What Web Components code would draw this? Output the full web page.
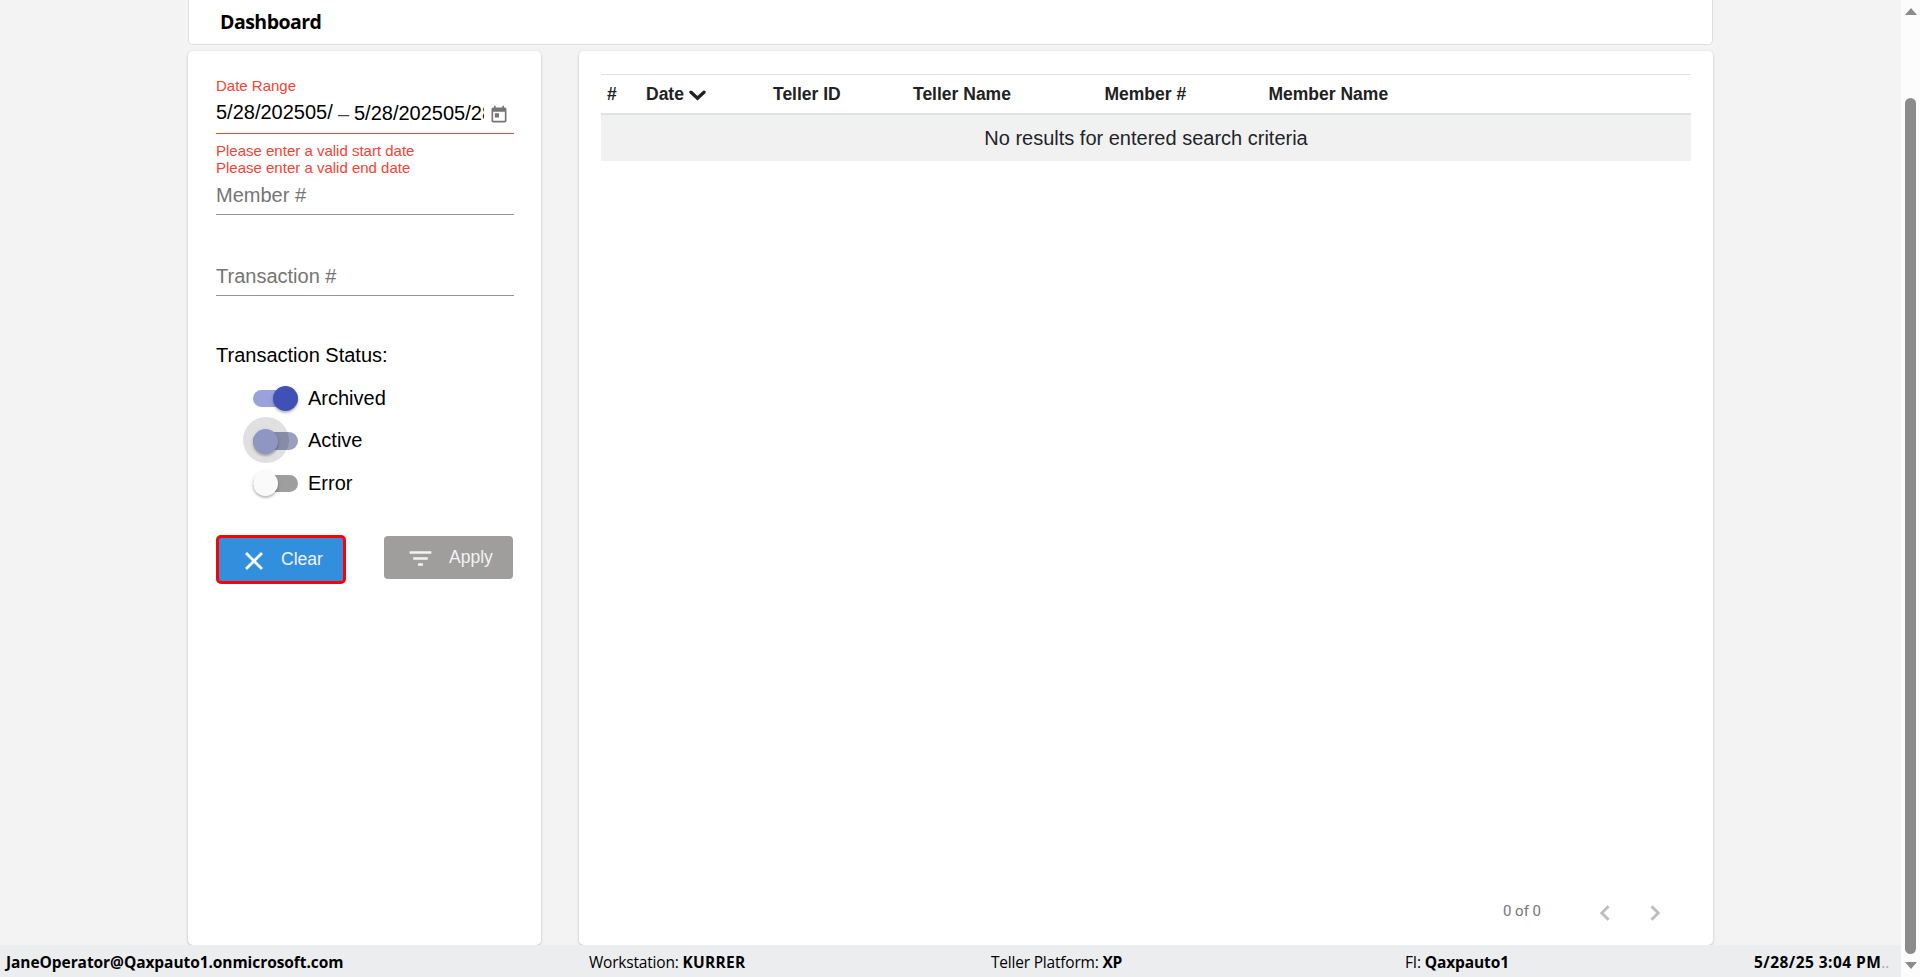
<!DOCTYPE html>
<html lang="en">
<head>
<meta charset="utf-8">
<title>Dashboard</title>
<style>
html,body{margin:0;height:100%;overflow:hidden;background:#f3f3f3;color:#000;font-family:"Liberation Sans",Arial,sans-serif}
</style>
</head>
<body>
<teller-app></teller-app>
<script>
const define = (name, html) => customElements.define(name, class extends HTMLElement {
  constructor() {
    super();
    const t = document.createElement('template');
    t.innerHTML = html;
    this.attachShadow({ mode: 'open' }).appendChild(t.content.cloneNode(true));
  }
});

define('page-title', `<style>
:host{display:flex;box-sizing:border-box;height:45px;padding:0 31px;border:1px solid #dedede;border-top:0;border-radius:0 0 5px 5px;background:#fff;font:700 19.5px/44px "Open Sans","Noto Sans",sans-serif;letter-spacing:-.52px}
</style><slot></slot>`);

define('ui-card', `<style>
:host{display:flex;flex-direction:column;box-sizing:border-box;background:#fff;border-radius:5px;box-shadow:0 1px 3px rgba(0,0,0,.22)}
</style><slot></slot>`);

define('date-range', `<style>
:host{display:block;height:101px;box-sizing:border-box}
.label{height:17px;font-size:15px;line-height:17px;color:#f44336}
.row{display:flex;align-items:center;height:39px;border-bottom:1px solid #f44336;font-size:20px;line-height:24px}
.v{overflow:hidden;white-space:nowrap}
.s{width:117px;padding-bottom:3px}.dash{width:21px;text-align:center;color:#444;padding-top:0}.e{width:130px;padding-bottom:1px}
svg{margin-left:5px;margin-top:2px;flex:none}
.err{margin-top:8px;font-size:15px;line-height:17px;color:#f44336}
</style>
<div class="label">Date Range</div>
<div class="row"><span class="v s">5/28/202505/</span><span class="dash">–</span><span class="v e">5/28/202505/28</span>
<svg width="20" height="20" viewBox="0 0 24 24" fill="#757575"><path d="M19 3h-1V1h-2v2H8V1H6v2H5c-1.100 0-2 .9-2 2v14c0 1.100.9 2 2 2h14c1.100 0 2-.9 2-2V5c0-1.100-.9-2-2-2zm0 16H5V8h14v11zM7 10h5v5H7z"/></svg></div>
<div class="err">Please enter a valid start date<br>Please enter a valid end date</div>`);

define('text-field', `<style>
:host{display:block;box-sizing:border-box;height:33px;border-bottom:1px solid #949494;font-size:20px;line-height:24px;color:#757575;padding-top:1px}
</style><slot></slot>`);

define('slide-toggle', `<style>
:host{display:flex;align-items:center;height:42.5px;margin-left:37px;font-size:20px;gap:10px}
.t{position:relative;width:45px;height:17.5px;border-radius:9px;background:#9e9e9e}
.k{position:absolute;left:0;top:-3.500px;width:25px;height:25px;border-radius:50%;background:#fafafa;box-shadow:0 2px 2px rgba(0,0,0,.2),0 1px 4px rgba(0,0,0,.12)}
:host([state=on]) .t{background:#9aa2dc}
:host([state=on]) .k{left:20px;background:#3f51b5}
:host([state=mid]) .t{background:#9a9fbd}
:host([state=mid]) .k{background:#8f96c1}
.r{display:none;position:absolute;left:-10px;top:-15px;width:46px;height:46px;border-radius:50%;background:rgba(0,0,0,.12)}
:host([state=mid]) .r{display:block}
</style><div class="t"><span class="r"></span><span class="k"></span></div><slot></slot>`);

define('action-button', `<style>
:host{display:flex;box-sizing:border-box;align-items:center;width:129px;height:43px;margin-top:1px;padding-left:22px;border-radius:4px;background:#9f9e9c;color:#f3f3f3;font-size:17.5px}
:host([primary]){width:130px;height:49px;margin-top:0;border:3px solid #f00;border-radius:5px;background:#318fdd;padding-left:20px}
svg{flex:none;margin-top:3px}
slot{display:block;margin-left:14px}
:host([primary]) svg{margin-top:4px}
:host([primary]) slot{margin-left:12px}
.f{display:block}.x{display:none}
:host([primary]) .f{display:none}:host([primary]) .x{display:block}
</style>
<svg class="f" width="29" height="29" viewBox="0 0 24 24" fill="#f3f3f3"><path d="M10 18h4v-2h-4v2zM3 6v2h18V6H3zm3 7h12v-2H6v2z"/></svg>
<svg class="x" width="30" height="30" viewBox="0 0 24 24" fill="#fff" stroke="#fff" stroke-width=".3"><path d="M19 6.410 17.590 5 12 10.590 6.410 5 5 6.410 10.590 12 5 17.590 6.410 19 12 13.410 17.590 19 19 17.590 13.410 12z"/></svg>
<slot></slot>`);

define('filter-panel', `<style>
:host{display:flex;flex-direction:column;padding:26px 27px 0 28px}
.m{margin-top:4px}.tr{margin-top:48px}
h2{margin:46px 0 0;font-size:20px;line-height:26px;font-weight:400}
.ts{display:flex;flex-direction:column;margin-top:9px}
.b{display:flex;justify-content:space-between;margin-top:30px;padding-right:1px}
</style>
<date-range></date-range>
<text-field class="m">Member #</text-field>
<text-field class="tr">Transaction #</text-field>
<h2>Transaction Status:</h2>
<div class="ts"><slide-toggle state="on">Archived</slide-toggle><slide-toggle state="mid">Active</slide-toggle><slide-toggle>Error</slide-toggle></div>
<div class="b"><action-button primary>Clear</action-button><action-button>Apply</action-button></div>`);

define('results-table', `<style>
:host{display:block;padding:23px 22px 0;color:#212529}
.h{display:grid;grid-template-columns:39px 127px 140px 191.500px 164px 1fr;box-sizing:border-box;height:41px;padding-left:6px;border-top:1px solid #dee2e6;border-bottom:2px solid #dee2e6;font:700 17.500px/39px "Liberation Sans",Arial,sans-serif;color:#212121}
.h span{display:flex;align-items:center;height:39px}
svg{margin-left:5px;margin-top:2px}
.e{height:46px;background:#f1f1f1;text-align:center;font-size:20px;line-height:46px}
</style>
<div class="h"><span>#</span><span>Date<svg width="17" height="11" viewBox="0 0 17 11"><path d="M2 2.200 8.500 8.300 15 2.200" fill="none" stroke="#212121" stroke-width="3.300" stroke-linecap="round"/></svg></span><span>Teller ID</span><span>Teller Name</span><span>Member #</span><span>Member Name</span></div>
<div class="e">No results for entered search criteria</div>`);

define('page-nav', `<style>
:host{display:flex;align-items:center;justify-content:flex-end;margin-top:auto;height:30px;padding:0 43px 19px 0;font-size:15px;color:#757575;font-family:Roboto,sans-serif}
svg{margin-top:3px;margin-left:20px}svg:first-of-type{margin-left:49px}
</style><span>0 of 0</span>
<svg width="30" height="30" viewBox="0 0 24 24" fill="#bdbdbd" stroke="#bdbdbd" stroke-width=".4"><path d="M15.410 7.410 14 6l-6 6 6 6 1.410-1.410L10.830 12z"/></svg>
<svg width="30" height="30" viewBox="0 0 24 24" fill="#bdbdbd" stroke="#bdbdbd" stroke-width=".4"><path d="M10 6 8.590 7.410 13.170 12l-4.580 4.590L10 18l6-6z"/></svg>`);

define('status-bar', `<style>
:host{display:grid;grid-template-columns:583px 402px 414px 349px auto;box-sizing:border-box;height:32px;padding-left:6px;background:#ecedef;font:400 15.500px/35px "Open Sans","Noto Sans",sans-serif;white-space:nowrap}
b{font-weight:700}
i{font-style:normal;color:#aaa}
.u{letter-spacing:-.07px}
.w{letter-spacing:-.2px}
.k{letter-spacing:.3px}
.q{letter-spacing:-.1px}
.d{letter-spacing:.45px}
</style>
<b class="u">JaneOperator@Qaxpauto1.onmicrosoft.com</b><span class="w">Workstation: <b class="k">KURRER</b></span><span class="w">Teller Platform: <b>XP</b></span><span class="w">FI: <b class="q">Qaxpauto1</b></span><span><b class="d">5/28/25 3:04 PM</b><i>..</i></span>`);

define('scroll-rail', `<style>
:host{display:flex;flex-direction:column;align-items:center;box-sizing:border-box;width:19px;height:977px;padding:8px 0;background:#fcfcfc}
.up,.dn{border:6.500px solid transparent}
.up{border-top:0;border-bottom:7px solid #8b8b8b}
.dn{border-bottom:0;border-top:7px solid #8b8b8b}
.th{width:11px;height:856px;margin-top:83px;margin-bottom:8px;border-radius:6px;background:#8b8b8b}
</style><span class="up"></span><span class="th"></span><span class="dn"></span>`);

define('teller-app', `<style>
:host{display:flex;width:1920px;height:977px}
main{display:flex;flex-direction:column;width:1901px;height:977px}
page-title{margin:0 188px 6px}
.c{display:grid;grid-template-columns:353px 1134px;column-gap:38px;height:894px;padding-left:188px}
status-bar{position:relative}
</style>
<main><page-title>Dashboard</page-title>
<div class="c"><ui-card><filter-panel></filter-panel></ui-card><ui-card><results-table></results-table><page-nav></page-nav></ui-card></div>
<status-bar></status-bar></main>
<scroll-rail></scroll-rail>`);
</script>
</body>
</html>
